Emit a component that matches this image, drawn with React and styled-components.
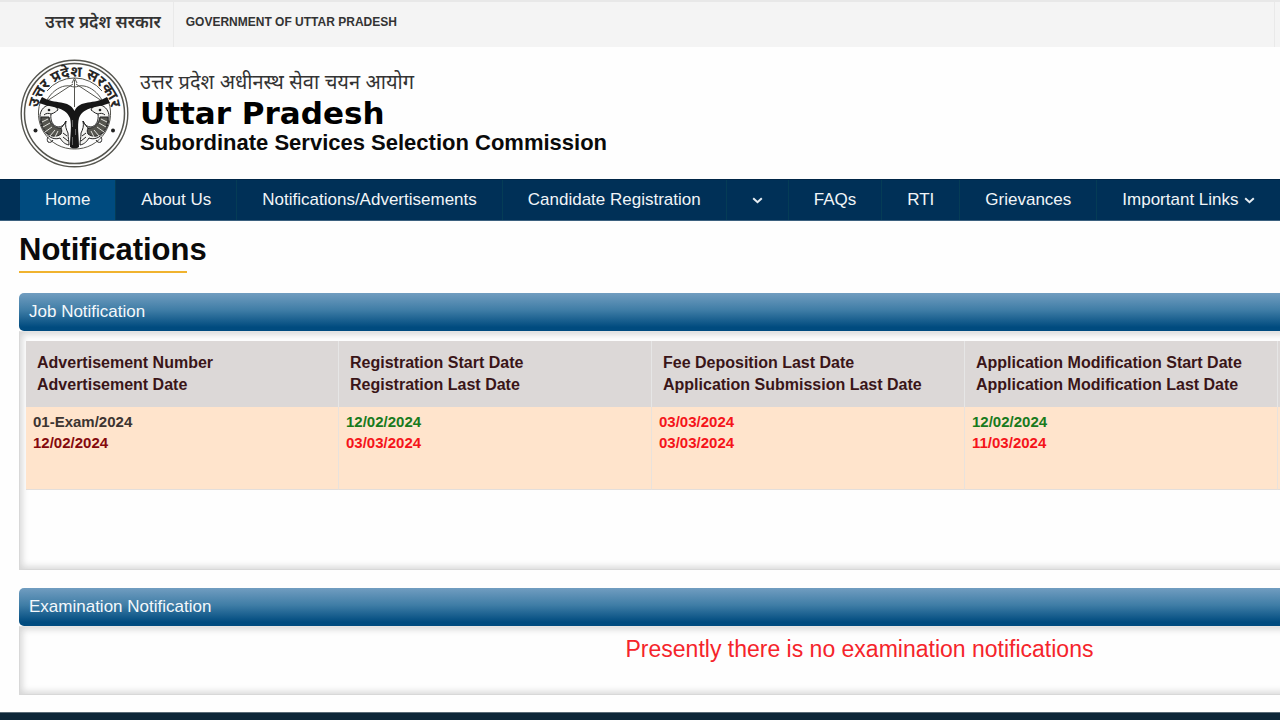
import React from 'react';
import styled, { createGlobalStyle } from 'styled-components';

const GlobalStyle = createGlobalStyle`
  *, *::before, *::after { box-sizing: border-box; }
  body {
    margin: 0;
    background: #fefefe;
    color: #0a0a0a;
    font-family: "Liberation Sans", Arial, "Noto Sans", sans-serif;
    overflow-x: hidden;
  }
`;

const Page = styled.div`
  overflow: hidden;
`;

const TopBar = styled.div`
  display: flex;
  height: 47px;
  padding: 0 5px 0 33px;
  background: #f4f4f4;
  border-top: 2px solid #e8e8e8;
`;

const TopItem = styled.span`
  display: flex;
  align-items: center;
  padding: 0 12px 6px;
  border-right: 1px solid #e9e9e9;
  flex-grow: ${(p) => (p.$grow ? 1 : 0)};
  font-size: ${(p) => p.$size}px;
  font-weight: ${(p) => p.$weight};
  color: #333;
  white-space: nowrap;
`;

const Header = styled.header`
  display: flex;
  gap: 11px;
  height: 132px;
  padding: 12px 20px;
`;

const Emblem = styled.svg`
  width: 109px;
  height: 109px;
  flex: none;
`;

const Titles = styled.div`
  display: flex;
  flex-direction: column;
  padding-top: 8px;
`;

const HindiTitle = styled.div`
  font-size: 20px;
  line-height: 30px;
  color: #333;
`;

const StateTitle = styled.div`
  font-family: "DejaVu Sans", "Liberation Sans", sans-serif;
  font-size: 31px;
  font-weight: 700;
  line-height: 32px;
  color: #000;
`;

const BodyTitle = styled.div`
  font-size: 22px;
  font-weight: 700;
  line-height: 28px;
`;

const Nav = styled.nav`
  display: flex;
  height: 42px;
  padding-left: 20px;
  background: #003057;
  border-top: 1px solid #002647;
  border-bottom: 1px solid #3c617f;
`;

const NavLink = styled.a`
  display: flex;
  flex: none;
  align-items: center;
  gap: 5px;
  padding: 0 25px;
  border-right: 1px solid #053c56;
  background: ${(p) => (p.$active ? '#004b7f' : 'transparent')};
  color: #f1f5f8;
  font-size: 17px;
  white-space: nowrap;
  text-decoration: none;
`;

const Content = styled.main`
  width: calc(100% + 440px);
  padding: 12px 20px 17px 19px;
`;

const Heading = styled.h1`
  width: 168px;
  margin: 0 0 20px;
  border-bottom: 2px solid #f0b32f;
  font-size: 31px;
  line-height: 34px;
  padding-bottom: 4px;
  white-space: nowrap;
`;

const Panel = styled.section`
  & + & { margin-top: 18px; }
`;

const PanelTitle = styled.h2`
  margin: 0;
  padding: 0 10px;
  border-radius: 5px;
  background: linear-gradient(#719dc0, #3f7da6 45%, #004b7f 90%);
  color: #f4f8fb;
  font-size: 17px;
  font-weight: 400;
  line-height: 38px;
`;

const PanelBody = styled.div`
  min-height: ${(p) => p.$height}px;
  padding: 9px 6px;
  border: 1px solid #d8d8d8;
  border-top-color: #e4e4e4;
  box-shadow: inset 0 0 7px 2px #d4d4d4;
`;

const Table = styled.table`
  width: 100%;
  table-layout: fixed;
  border-collapse: separate;
  border-spacing: 0;
`;

const DateColumn = styled.col`
  width: 313px;
`;

const HeadCell = styled.th`
  height: 66px;
  padding: 0 11px;
  border-right: 1px solid #e6e6e6;
  background: #dcd8d7;
  color: #3a1518;
  font-size: 16px;
  line-height: 22px;
  text-align: left;
`;

const Cell = styled.td`
  height: 83px;
  padding: 4px 7px;
  border-right: 1px solid #e9e2dc;
  border-bottom: 1px solid #e3dedb;
  background: #ffe4cc;
  font-size: 15px;
  font-weight: 700;
  line-height: 21px;
  vertical-align: top;
`;

const Line = styled.div`
  color: ${(p) => p.$color};
`;

const Message = styled.p`
  margin: 0;
  color: #f5242b;
  font-size: 23px;
  line-height: 26px;
  text-align: center;
`;

const Footer = styled.footer`
  height: 24px;
  background: #0d2638;
  border-top: 1px solid #5a6b77;
`;

const Chevron = () => (
  <svg width="11" height="7" viewBox="0 0 11 7" fill="none" stroke="#e6edf3" strokeWidth="2" aria-hidden="true">
    <path d="M1.2 1.2 5.5 5.2 9.8 1.2" />
  </svg>
);

const Fish = () => (
  <g stroke="#222" fill="none">
    <path d="M20 57c0-4 3-10 9-11 5 0 8 2 9 5-2 1-3 3-7 4-1 7 2 12 7 13 4 0 6-2 8-6-1 5 0 8 2 12 0 5 1 8 1 12-5-1-7-4-9-7-5 2-11 0-15-6-4-5-5-11-5-16Z" fill="#f4f4f1" strokeWidth="1" />
    <path d="M21 58c0 6 2 13 7 17 4 3 9 3 13 0 1-2 1-4 0-6-7 1-11-5-12-11Z" fill="#55554f" strokeWidth="1" />
    <path d="m22 63 6-3m-5 8 7-4m-5 9 7-5m-2 9 5-6m0 7 3-6" stroke="#e4e4df" strokeWidth="1" />
    <path d="M40 70c2-2 5-5 6-8m-3 12 4 3m-4 1 5 4M28 78c-1 2-1 3 0 5 2 1 4 0 5-2M24 56c2-2 5-2 7-1" strokeWidth="1" />
    <circle cx="29" cy="51" r="1.3" fill="#222" stroke="none" />
  </g>
);

const StateEmblem = () => (
  <Emblem viewBox="0 0 109 109" role="img" aria-label="Government of Uttar Pradesh emblem">
    <defs>
      <path id="arc" d="M18.500 62A36.800 36.800 0 1 1 90.500 62" />
    </defs>
    <g fill="none" stroke="#55554f">
      <circle cx="54.5" cy="54.5" r="53.3" strokeWidth="1.4" />
      <circle cx="54.5" cy="54.5" r="50" strokeWidth="1.5" />
      <path d="M22 39A35.500 35.500 0 0 0 54.500 90 35.500 35.500 0 0 0 87 39M27 32A35.500 35.500 0 0 1 82 32" strokeWidth="1" />
    </g>
    <text fontFamily="'Noto Sans', sans-serif" fontSize="15" fontWeight="700" fill="#262626" textAnchor="middle">
      <textPath href="#arc" startOffset="50%">उत्तर प्रदेश सरकार</textPath>
    </text>
    <circle cx="15.5" cy="71.5" r="2" fill="#222" />
    <circle cx="93" cy="71.5" r="2" fill="#222" />
    <Fish />
    <g transform="matrix(-1 0 0 1 109 0)"><Fish /></g>
    <g fill="none" stroke="#55554f" strokeWidth="1">
      <path d="M27 41c4-7 11-13 18-14 5-1 7 1 9.500 1 3 0 5-2 9.500-1 7 1 14 7 18 14M27 42 53 25M56 25 82 42M54.500 21V48M52 24l2.500-5 2.500 5" />
    </g>
    <path d="M22 38c13 8 27 2 32.500 14C60 40 74 46 87 38l3 6c-12 5-26 3-31 15-2 8 0 18 0 29q-4.500 3-9 0c0-11 2-21 0-29-5-12-19-10-31-15Z" fill="#161616" />
    <path d="M52.500 61v7m3 2v6m-3 2v8" stroke="#777" strokeWidth="0.800" />
  </Emblem>
);

const navItems = [
  { label: 'Home', active: true },
  { label: 'About Us' },
  { label: 'Notifications/Advertisements' },
  { label: 'Candidate Registration' },
  { label: '', menu: true },
  { label: 'FAQs' },
  { label: 'RTI' },
  { label: 'Grievances' },
  { label: 'Important Links', menu: true },
];

const GREEN = '#187a1c';
const RED = '#f5141a';

const columns = [
  { head: ['Advertisement Number', 'Advertisement Date'], rows: [['01-Exam/2024', '#3c3431'], ['12/02/2024', '#85090c']] },
  { head: ['Registration Start Date', 'Registration Last Date'], rows: [['12/02/2024', GREEN], ['03/03/2024', RED]] },
  { head: ['Fee Deposition Last Date', 'Application Submission Last Date'], rows: [['03/03/2024', RED], ['03/03/2024', RED]] },
  { head: ['Application Modification Start Date', 'Application Modification Last Date'], rows: [['12/02/2024', GREEN], ['11/03/2024', RED]] },
];

export default function App() {
  return (
    <Page>
      <GlobalStyle />
      <TopBar>
        <TopItem $size={17} $weight={600} lang="hi">उत्तर प्रदेश सरकार</TopItem>
        <TopItem $size={12} $weight={700} $grow>GOVERNMENT OF UTTAR PRADESH</TopItem>
      </TopBar>
      <Header>
        <StateEmblem />
        <Titles>
          <HindiTitle lang="hi">उत्तर प्रदेश अधीनस्थ सेवा चयन आयोग</HindiTitle>
          <StateTitle>Uttar Pradesh</StateTitle>
          <BodyTitle>Subordinate Services Selection Commission</BodyTitle>
        </Titles>
      </Header>
      <Nav>
        {navItems.map((item, i) => (
          <NavLink key={i} href="#" $active={item.active} aria-label={item.label || 'More'}>
            {item.label}
            {item.menu && <Chevron />}
          </NavLink>
        ))}
      </Nav>
      <Content>
        <Heading>Notifications</Heading>
        <Panel>
          <PanelTitle>Job Notification</PanelTitle>
          <PanelBody $height={239}>
            <Table>
              <colgroup>
                {columns.map((c) => <DateColumn key={c.head[0]} />)}
                <col />
              </colgroup>
              <thead>
                <tr>
                  {columns.map((c) => (
                    <HeadCell key={c.head[0]} scope="col">
                      {c.head.map((t) => <div key={t}>{t}</div>)}
                    </HeadCell>
                  ))}
                  <HeadCell />
                </tr>
              </thead>
              <tbody>
                <tr>
                  {columns.map((c) => (
                    <Cell key={c.head[0]}>
                      {c.rows.map(([text, color], i) => <Line key={i} $color={color}>{text}</Line>)}
                    </Cell>
                  ))}
                  <Cell />
                </tr>
              </tbody>
            </Table>
          </PanelBody>
        </Panel>
        <Panel>
          <PanelTitle>Examination Notification</PanelTitle>
          <PanelBody $height={69}>
            <Message>Presently there is no examination notifications</Message>
          </PanelBody>
        </Panel>
      </Content>
      <Footer />
    </Page>
  );
}
